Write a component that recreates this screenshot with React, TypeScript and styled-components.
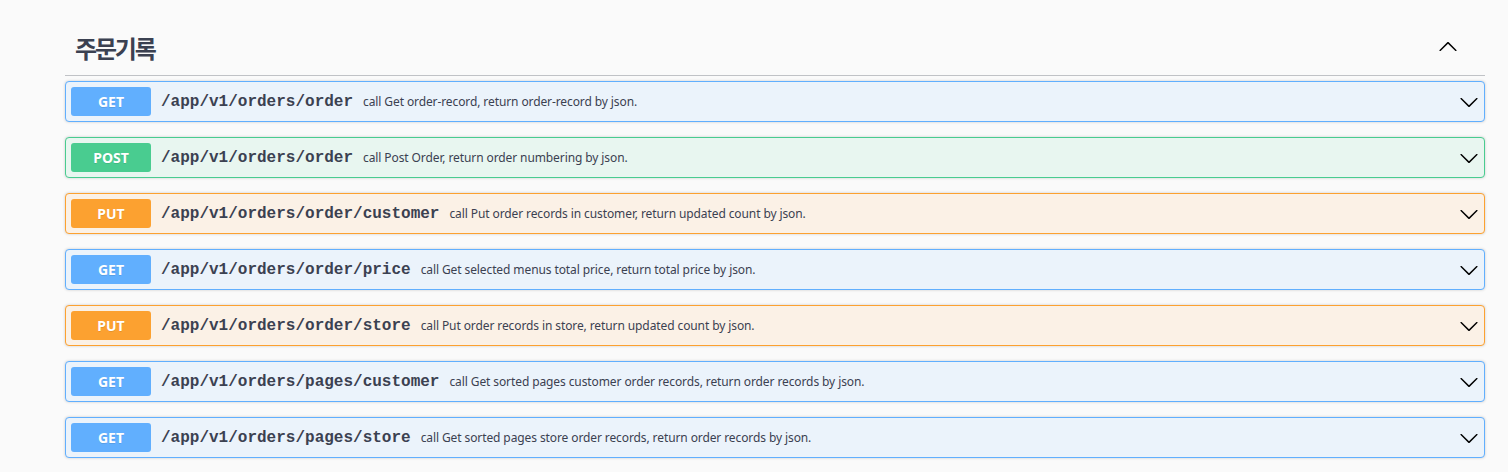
import React from "react";
import styled, { createGlobalStyle } from "styled-components";

const GlobalStyle = createGlobalStyle`
  html, body {
    margin: 0;
    padding: 0;
    background: #fafafa;
  }
  * { box-sizing: border-box; }
`;

type Method = "GET" | "POST" | "PUT";

const COLORS: Record<Method, { main: string; bg: string }> = {
  GET: { main: "#61affe", bg: "#ebf3fb" },
  POST: { main: "#49cc90", bg: "#e8f6f0" },
  PUT: { main: "#fca130", bg: "#fbf1e6" },
};

const Page = styled.div`
  padding: 19px 23px 0 65px;
  font-family: "Noto Sans", "Noto Sans CJK KR", sans-serif;
  color: #3b4151;
`;

const Section = styled.section`
  width: 1420px;
`;

const TagHeader = styled.h3`
  margin: 0 0 5px;
  display: flex;
  align-items: center;
  justify-content: space-between;
  height: 57px;
  padding: 10px 27px 10px 10px;
  border-bottom: 1px solid rgba(59, 65, 81, 0.3);
  font-family: "Noto Sans CJK KR", "Noto Sans", sans-serif;
  font-size: 24px;
  font-weight: 700;
  letter-spacing: -2.2px;
  color: #3b4151;
`;

const TagTitle = styled.span`
  line-height: 36px;
  position: relative;
  top: 1px;
`;

const IconButton = styled.button`
  border: none;
  background: none;
  padding: 0;
  display: flex;
  align-items: center;
  cursor: pointer;
  color: #000;
`;

const Block = styled.div<{ $method: Method }>`
  margin: 0 0 15px;
  border: 1px solid ${(p) => COLORS[p.$method].main};
  background: ${(p) => COLORS[p.$method].bg};
  border-radius: 4px;
  box-shadow: 0 0 3px rgba(0, 0, 0, 0.19);
`;

const Summary = styled.div`
  display: flex;
  align-items: center;
  padding: 5px;
  height: 39px;
`;

const MethodBadge = styled.span<{ $method: Method }>`
  flex: none;
  min-width: 80px;
  padding: 6px 0;
  line-height: 17px;
  text-align: center;
  font-family: "Noto Sans", "Open Sans", sans-serif;
  font-size: 14px;
  font-weight: 700;
  color: #fff;
  border-radius: 3px;
  background: ${(p) => COLORS[p.$method].main};
  text-shadow: 0 1px 0 rgba(0, 0, 0, 0.1);
`;

const Path = styled.span`
  padding: 0 10px;
  font-family: "Liberation Mono", monospace;
  font-size: 16px;
  font-weight: 700;
  color: #3b4151;
  white-space: nowrap;
`;

const Description = styled.span`
  flex: 1;
  font-family: "Noto Sans", "Open Sans", sans-serif;
  font-size: 12px;
  letter-spacing: -0.1px;
  color: #3b4151;
  white-space: nowrap;
`;

const ArrowSvg = styled.svg<{ $up?: boolean }>`
  width: 20px;
  height: 20px;
  flex: none;
  transform: ${(p) => (p.$up ? "rotate(180deg)" : "none")};
`;

const Arrow = ({ up }: { up?: boolean }) => (
  <ArrowSvg $up={up} viewBox="0 0 20 20" fill="currentColor">
    <path d="M17.418 6.109c.272-.268.709-.268.979 0s.271.701 0 .969l-7.908 7.83c-.27.268-.707.268-.979 0l-7.908-7.830c-.27-.268-.27-.701 0-.969.271-.268.709-.268.979 0L10 13.25l7.418-7.141z" />
  </ArrowSvg>
);

const ops: { method: Method; path: string; desc: string }[] = [
  { method: "GET", path: "/app/v1/orders/order", desc: "call Get order-record, return order-record by json." },
  { method: "POST", path: "/app/v1/orders/order", desc: "call Post Order, return order numbering by json." },
  { method: "PUT", path: "/app/v1/orders/order/customer", desc: "call Put order records in customer, return updated count by json." },
  { method: "GET", path: "/app/v1/orders/order/price", desc: "call Get selected menus total price, return total price by json." },
  { method: "PUT", path: "/app/v1/orders/order/store", desc: "call Put order records in store, return updated count by json." },
  { method: "GET", path: "/app/v1/orders/pages/customer", desc: "call Get sorted pages customer order records, return order records by json." },
  { method: "GET", path: "/app/v1/orders/pages/store", desc: "call Get sorted pages store order records, return order records by json." },
];

export default function App() {
  return (
    <>
      <GlobalStyle />
      <Page>
        <Section>
          <TagHeader>
            <TagTitle>주문기록</TagTitle>
            <IconButton aria-label="collapse">
              <Arrow up />
            </IconButton>
          </TagHeader>
          {ops.map((op, i) => (
            <Block key={i} $method={op.method}>
              <Summary>
                <MethodBadge $method={op.method}>{op.method}</MethodBadge>
                <Path>{op.path}</Path>
                <Description>{op.desc}</Description>
                <IconButton aria-label="expand">
                  <Arrow />
                </IconButton>
              </Summary>
            </Block>
          ))}
        </Section>
      </Page>
    </>
  );
}
